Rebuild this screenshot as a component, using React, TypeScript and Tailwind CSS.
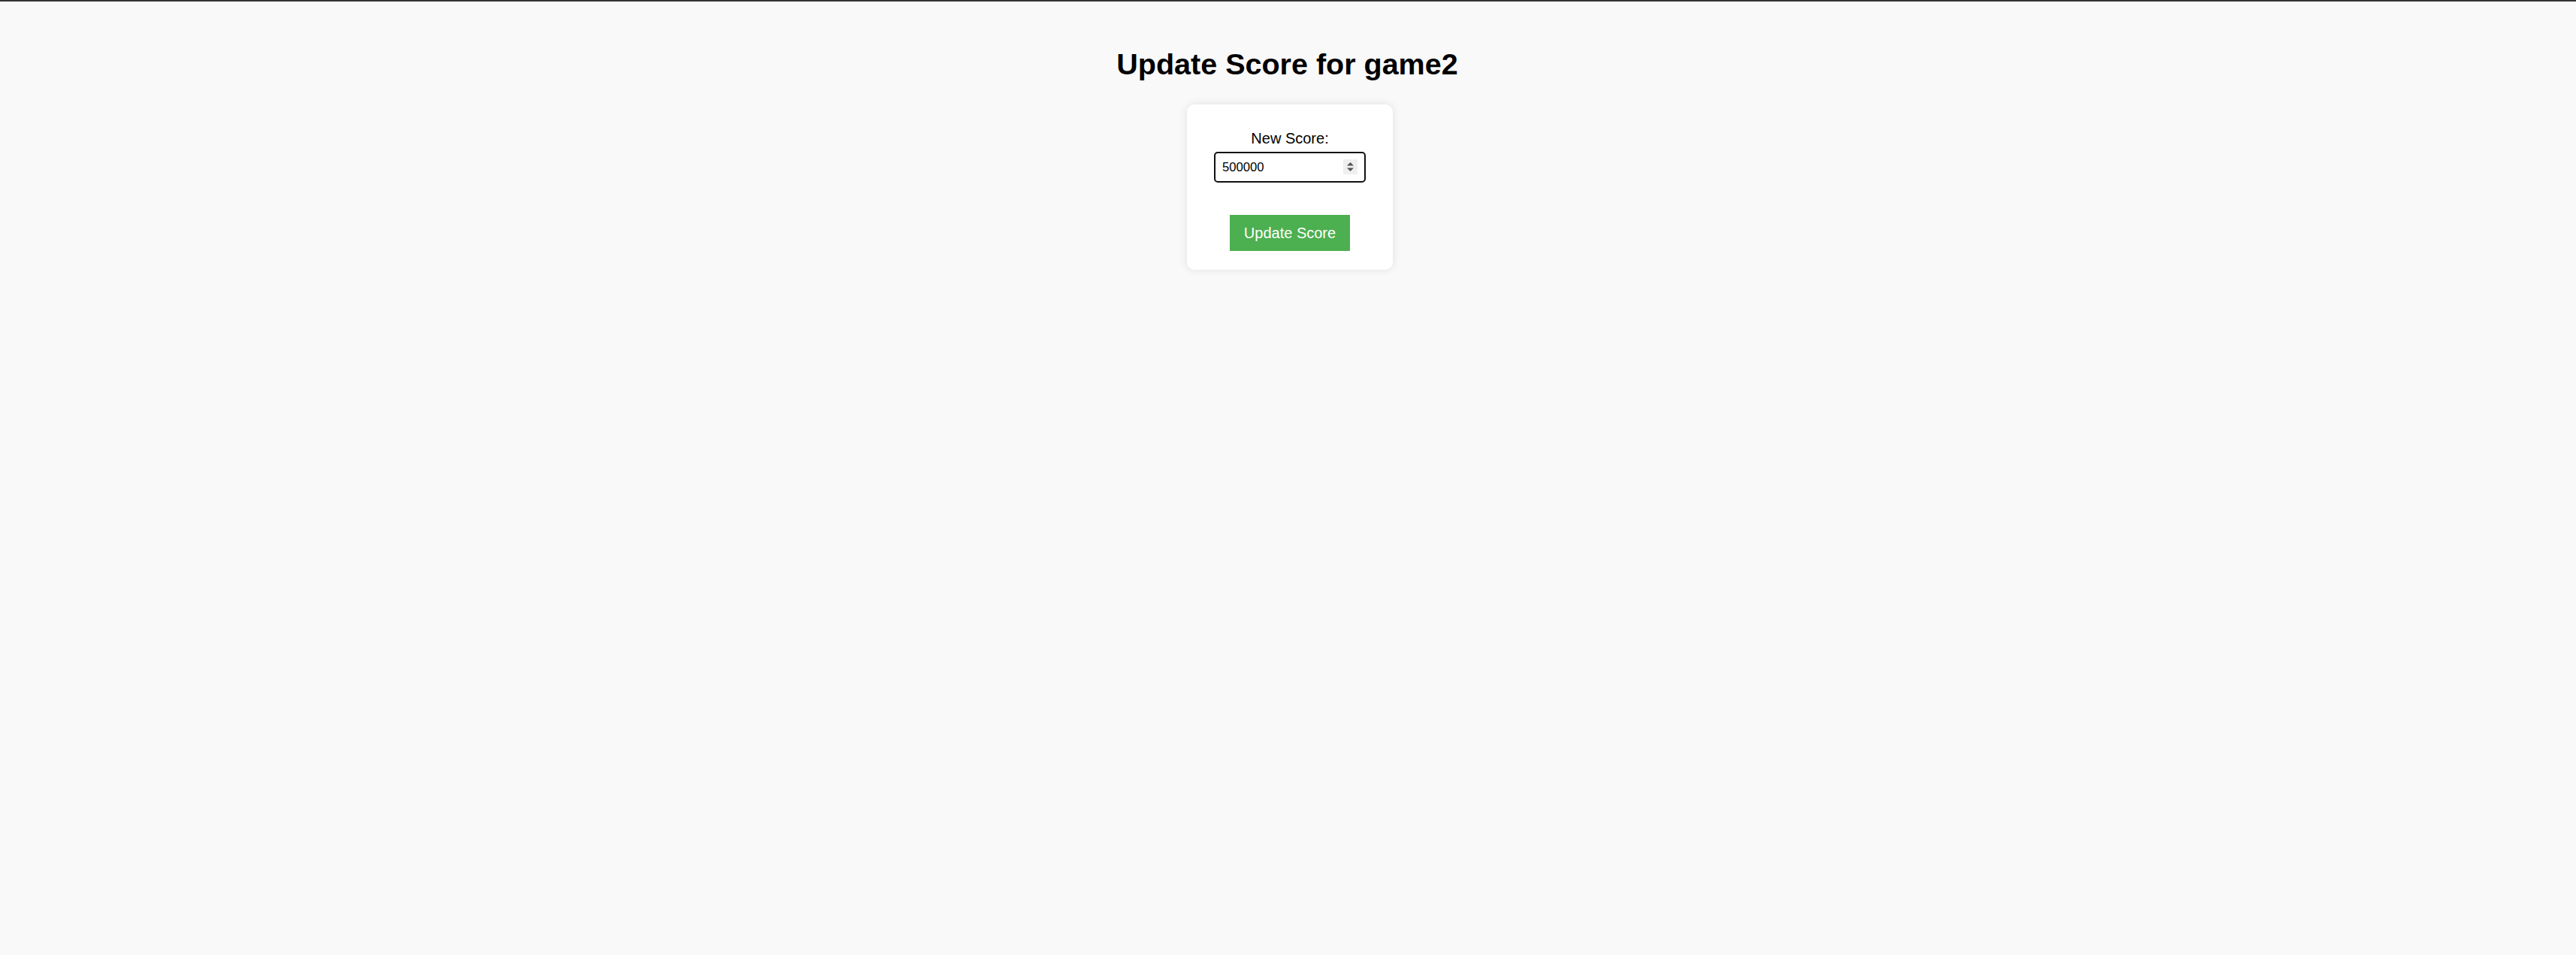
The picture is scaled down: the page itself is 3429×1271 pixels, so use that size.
import React from "react";

export default function App() {
  return (
    <div className="min-h-[1271px] w-full bg-[#f9f9f9]" style={{ fontFamily: '"Liberation Sans", Arial, sans-serif' }}>
      <div className="h-[2px] w-full bg-[#333333]" />
      <div className="flex flex-col items-center pt-[60px]">
        <h1 className="m-0 mr-[2px] text-[39.5px] leading-[46px] font-bold text-black">Update Score for game2</h1>
        <div className="mt-[31px] ml-[5px] flex w-[274px] flex-col items-center rounded-[10px] bg-white pt-[34px] pb-[25px] shadow-[0_0_12px_rgba(0,0,0,0.1)]">
          <label className="text-[20px] leading-[23px] text-black">New Score:</label>
          <div className="relative mt-[6px] h-[41px] w-[202px]">
            <input
              type="text"
              readOnly
              value="500000"
              className="h-full w-full rounded-[5px] border-2 border-[#111111] bg-white pl-[9px] pr-[32px] text-[16.67px] text-black outline-none"
              style={{ fontFamily: '"Liberation Sans", Arial, sans-serif' }}
            />
            <div className="absolute right-[11px] top-[10px] flex h-[20px] w-[19px] items-center justify-center bg-[#efefef]">
              <svg width="11" height="14" viewBox="0 0 11 14">
                <path d="M5.5 1 L10 5.5 L1 5.5 Z" fill="#555555" />
                <path d="M5.5 13 L10 8.5 L1 8.5 Z" fill="#555555" />
              </svg>
            </div>
          </div>
          <button className="mt-[43px] h-[48px] w-[160px] bg-[#4caf50] text-[20px] text-white">Update Score</button>
        </div>
      </div>
    </div>
  );
}
